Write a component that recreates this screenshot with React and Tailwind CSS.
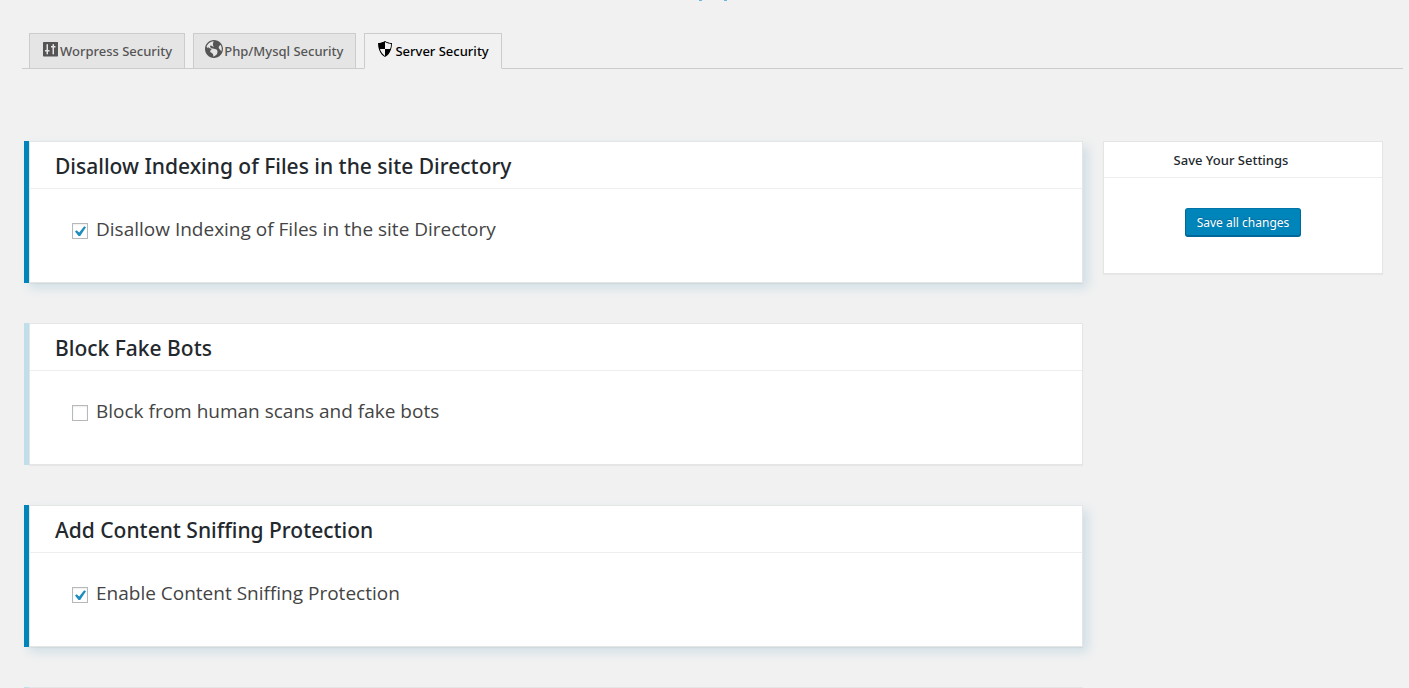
const ICONS = {
  settings: {
    viewBox: "0 0 20 20",
    d: "M18 17V3.5l-.5-.5h-14l-.5.500V17l.5.5h14zM6.500 5.500c0-.3.300-.5.750-.5s.750.200.750.5V11h1.500v1.500H8V15c0 .3-.3.500-.75.500s-.75-.2-.75-.5v-2.500H5V11h1.500zM12.500 5.500c0-.3.300-.5.750-.5s.750.200.750.5V7h1.500v1.500H14V15c0 .3-.3.500-.75.500s-.75-.2-.75-.5V8.500H11V7h1.500z",
  },
  globe: {
    viewBox: "-1 -1 20 20",
    d: "M9 0C4.03 0 0 4.03 0 9s4.03 9 9 9 9-4.03 9-9-4.03-9-9-9zm3.46 11.95c0 1.47-.8 3.3-4.06 4.7.3-4.17-2.52-3.69-3.2-5 .126-1.1.804-2.063 1.8-2.55-1.552-.266-3-.96-4.18-2 .05.47.28.904.64 1.21-.782-.295-1.458-.817-1.94-1.5.977-3.225 3.883-5.482 7.25-5.63-.84 1.38-1.5 4.13 0 5.57C7.23 7 6.26 5 5.41 5.79c-1.13 1.06.33 2.51 3.42 3.08 3.29.59 3.66 1.58 3.63 3.08zm1.34-4c-.32-1.11.62-2.23 1.69-3.14 1.356 1.955 1.67 4.45.84 6.68-.77-1.89-2.17-2.32-2.53-3.57v.03z",
  },
  shield: {
    viewBox: "0 0 20 20",
    d: "M10 2s3 2 7 2c0 11-7 14-7 14S3 15 3 4c4 0 7-2 7-2zm0 8h5s1-1 1-5c0 0-5-1-6-2v7H5c1 4 5 7 5 7v-7z",
  },
};

const TABS = [
  { icon: "settings", label: "Worpress Security" },
  { icon: "globe", label: "Php/Mysql Security" },
  { icon: "shield", label: "Server Security", active: true },
];

const OPTIONS = [
  {
    id: "indexing",
    title: "Disallow Indexing of Files in the site Directory",
    label: "Disallow Indexing of Files in the site Directory",
    checked: true,
  },
  { id: "bots", title: "Block Fake Bots", label: "Block from human scans and fake bots", checked: false },
  { id: "sniffing", title: "Add Content Sniffing Protection", label: "Enable Content Sniffing Protection", checked: true },
];

function Tab({ icon, label, active }) {
  const { viewBox, d } = ICONS[icon];
  return (
    <a
      href="#"
      className={`flex border pt-[5px] pr-3 pl-[10px] text-[13px] font-medium leading-6 ${
        active
          ? "-mb-px h-9 border-[#ccc] border-b-[#f1f1f1] bg-[#f1f1f1] text-black"
          : "h-[35px] border-[#ccc] border-b-0 bg-[#e5e5e5] text-[#555]"
      }`}
    >
      <svg viewBox={viewBox} className="h-5 w-5 fill-current" aria-hidden="true">
        <path d={d} fillRule="evenodd" />
      </svg>
      {label}
    </a>
  );
}

function OptionCard({ id, title, label, checked }) {
  return (
    <section className="border-l-[5px] border-[#bfdfea] has-checked:border-[#0085ba] has-checked:shadow-[5px_5px_10px_#d0dfe6]">
      <div className="border border-[#e5e5e5] bg-white shadow-[0_1px_1px_rgba(0,0,0,0.04)]">
        <h2 className="border-b border-[#eee] px-[25px] pt-[9px] pb-[6px] text-[21px] font-medium leading-[31px] text-[#23282d]">
          {title}
        </h2>
        <div className="flex items-start gap-2 px-[42px] pt-[25px] pb-[38px]">
          <input
            id={id}
            type="checkbox"
            defaultChecked={checked}
            className="peer mt-[9px] h-4 w-4 shrink-0 appearance-none border border-[#b4b9be] bg-white shadow-[inset_0_1px_2px_rgba(0,0,0,0.07)]"
          />
          <svg
            viewBox="0 0 16 16"
            className="pointer-events-none mt-[9px] -ml-6 hidden h-4 w-4 shrink-0 fill-[#1e8cbe] peer-checked:block"
            aria-hidden="true"
          >
            <path d="M12.2 3.3 14 4.2 8.2 13H6.5L3 8.4 4.6 7.2 7.2 9.6z" />
          </svg>
          <label htmlFor={id} className="font-['Open_Sans','Noto_Sans',sans-serif] text-[19px] leading-[30px] text-[#444]">
            {label}
          </label>
        </div>
      </div>
    </section>
  );
}

export default function App() {
  return (
    <div className="h-screen overflow-hidden bg-[#f1f1f1] pr-[6px] pl-[22px] font-['Noto_Sans','Open_Sans',sans-serif]">
      <div className="flex h-[33px] items-start justify-center">
        <svg viewBox="0 0 28 1" className="h-px w-7" aria-hidden="true">
          <path d="M0 0h3v1H0zM25 0h3v1h-3z" fill="#6db5dc" />
        </svg>
      </div>
      <nav className="flex gap-2 border-b border-[#ccc] pl-[7px]">
        {TABS.map((tab) => (
          <Tab key={tab.label} {...tab} />
        ))}
      </nav>
      <div className="mt-[72px] flex items-start gap-5 pr-5 pl-[2px]">
        <main className="flex min-w-0 flex-1 flex-col gap-10">
          {OPTIONS.map((option) => (
            <OptionCard key={option.id} {...option} />
          ))}
          <div className="border-l-[5px] border-[#bfdfea]">
            <div className="h-10 border border-[#e5e5e5] bg-white" />
          </div>
        </main>
        <aside className="w-[280px] border border-[#e5e5e5] bg-white shadow-[0_1px_1px_rgba(0,0,0,0.04)]">
          <h2 className="border-b border-[#eee] pt-[9px] pb-[7px] pr-6 text-center text-[13px] font-medium leading-[19px] text-[#23282d]">
            Save Your Settings
          </h2>
          <div className="flex justify-center pt-[30px] pb-9">
            <button
              type="button"
              className="h-[29px] rounded-[3px] border border-[#006799] border-t-[#0073aa] bg-[#0085ba] px-[11px] text-xs leading-[26px] text-white shadow-[inset_0_-1px_0_#006799] [text-shadow:0_-1px_1px_#006799]"
            >
              Save all changes
            </button>
          </div>
        </aside>
      </div>
    </div>
  );
}
